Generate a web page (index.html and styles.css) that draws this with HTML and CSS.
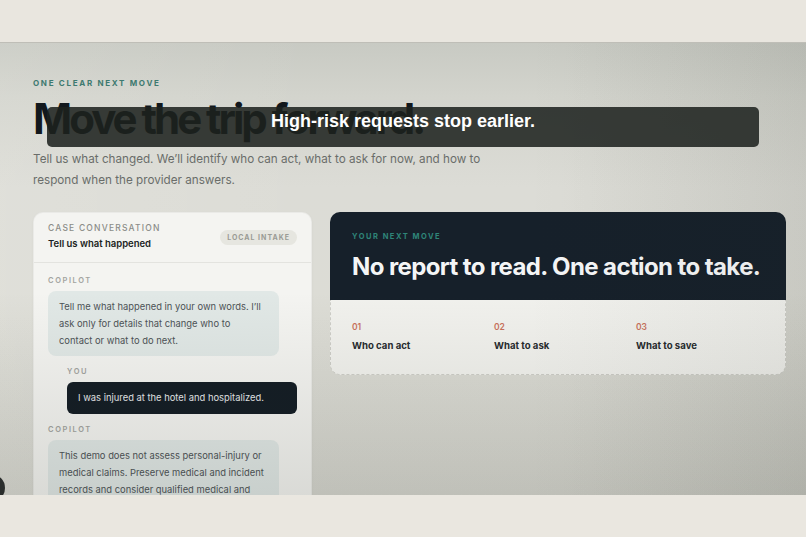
FILE: index.html
```html
<!DOCTYPE html>
<html lang="en">
<head>
<meta charset="utf-8">
<title>Move the trip forward</title>
<link rel="stylesheet" href="styles.css">
</head>
<body>
<div class="band-top"></div>
<main class="stage">
  <header class="hero">
    <p class="eyebrow">ONE CLEAR NEXT MOVE</p>
    <h1 class="title">Move the trip forward.</h1>
    <p class="lede">Tell us what changed. We’ll identify who can act, what to ask for now, and how to respond when the provider answers.</p>
  </header>
  <div class="cols">
    <section class="chat">
      <div class="chat-head">
        <div>
          <p class="chat-kicker">CASE CONVERSATION</p>
          <p class="chat-title">Tell us what happened</p>
        </div>
        <span class="badge">LOCAL INTAKE</span>
      </div>
      <div class="chat-body">
        <div class="msg bot">
          <p class="who">COPILOT</p>
          <p class="bubble">Tell me what happened in your own words. I’ll ask only for details that change who to contact or what to do next.</p>
        </div>
        <div class="msg me">
          <p class="who">YOU</p>
          <p class="bubble">I was injured at the hotel and hospitalized.</p>
        </div>
        <div class="msg bot">
          <p class="who">COPILOT</p>
          <p class="bubble">This demo does not assess personal-injury or medical claims. Preserve medical and incident records and consider qualified medical and legal help.</p>
        </div>
      </div>
    </section>
    <section class="move">
      <div class="move-top">
        <p class="move-kicker">YOUR NEXT MOVE</p>
        <h2 class="move-title">No report to read. One action to take.</h2>
      </div>
      <ol class="steps">
        <li class="step"><span class="step-num">01</span><span class="step-label">Who can act</span></li>
        <li class="step"><span class="step-num">02</span><span class="step-label">What to ask</span></li>
        <li class="step"><span class="step-num">03</span><span class="step-label">What to save</span></li>
      </ol>
    </section>
  </div>
  <div class="shade"></div>
  <div class="caption">High-risk requests stop earlier.</div>
  <span class="fab"></span>
</main>
<div class="band-bottom"></div>
</body>
</html>
```

FILE: styles.css
```css
* { box-sizing: border-box; margin: 0; padding: 0; }
html, body { width: 806px; height: 537px; overflow: hidden; }
body {
  background: #e9e6df;
  font-family: Inter, "Noto Sans", sans-serif;
  color: #13191e;
}

.band-top {
  height: 43px;
  background: #e9e6df;
  border-bottom: 1px solid #bfbeb7;
}
.band-bottom {
  height: 42px;
  background: #eae7e0;
}

.stage {
  position: relative;
  height: 452px;
  overflow: hidden;
  padding: 34px 20px 0 33px;
  background:
    linear-gradient(90deg, rgba(255,255,250,0.10) 0%, rgba(255,255,250,0) 40%, rgba(0,0,0,0) 70%, rgba(40,45,35,0.06) 100%),
    linear-gradient(180deg, #c8cac3 0%, #d3d4cd 12%, #dcdcd6 32%, #dcdcd5 60%, #d6d6cf 100%);
}

/* hero */
.eyebrow {
  font-size: 8px;
  line-height: 12px;
  font-weight: 700;
  letter-spacing: 1.7px;
  color: #3e7a70;
}
.title {
  margin-top: 8px;
  font-size: 42px;
  line-height: 44px;
  font-weight: 700;
  letter-spacing: -3px;
  color: #12181d;
}
.lede {
  margin-top: 8px;
  max-width: 455px;
  font-size: 11.7px;
  line-height: 21px;
  color: #6a6d6a;
}

/* columns */
.cols {
  margin-top: 21px;
  display: flex;
  gap: 18px;
  align-items: flex-start;
}

/* chat card */
.chat {
  width: 279px;
  flex: none;
  height: 320px;
  background: #f4f4f1;
  border: 1px solid rgba(0,0,0,0.04);
  border-radius: 10px;
  box-shadow: 0 1px 3px rgba(0,0,0,0.04);
  overflow: hidden;
}
.chat-head {
  display: flex;
  align-items: center;
  justify-content: space-between;
  padding: 10px 14px 11px 14px;
  border-bottom: 1px solid #e3e3df;
}
.chat-kicker {
  font-size: 8.5px;
  line-height: 11px;
  font-weight: 500;
  letter-spacing: 1.2px;
  color: #8b8c88;
}
.chat-title {
  margin-top: 3px;
  font-size: 9.5px;
  line-height: 14px;
  font-weight: 600;
  color: #1b1f22;
}
.badge {
  display: inline-flex;
  align-items: center;
  height: 15px;
  padding: 0 7px;
  border-radius: 999px;
  background: #e6e6e0;
  font-size: 7px;
  font-weight: 700;
  letter-spacing: 1px;
  color: #9a9b95;
}
.chat-body {
  padding: 13px 14px 0 14px;
  display: flex;
  flex-direction: column;
  gap: 11px;
}
.msg { width: 231px; }
.msg.me { margin-left: auto; width: 230px; }
.who {
  font-size: 7.5px;
  line-height: 10px;
  font-weight: 600;
  letter-spacing: 1.6px;
  color: #a2a39f;
  margin-bottom: 5px;
}
.bubble {
  font-size: 9.4px;
  line-height: 17px;
  padding: 7px 11px;
  border-radius: 8px;
}
.msg.bot .bubble {
  background: #e1e8e6;
  color: #4d5356;
  padding-right: 13px;
}
.msg.me .bubble {
  background: #131c24;
  color: #e8eaec;
  line-height: 18px;
  border-radius: 6px;
}

/* next move card */
.move {
  flex: none;
  width: 456px;
  border-radius: 10px;
  overflow: hidden;
}
.move-top {
  background: #16202a;
  padding: 20px 22px 18px 22px;
}
.move-kicker {
  font-size: 7.5px;
  line-height: 10px;
  font-weight: 700;
  letter-spacing: 1.5px;
  color: #2f8579;
}
.move-title {
  margin-top: 10px;
  font-size: 24px;
  line-height: 30px;
  font-weight: 700;
  letter-spacing: -0.6px;
  color: #f4f5f6;
}
.steps {
  list-style: none;
  display: grid;
  grid-template-columns: repeat(3, 142px);
  padding: 22px 21px 21px 21px;
  background: #f1f1ed;
  border: 1px dashed #cdcdc7;
  border-top: none;
  border-radius: 0 0 10px 10px;
}
.step { display: flex; flex-direction: column; }
.step-num {
  font-size: 8.5px;
  line-height: 11px;
  font-weight: 600;
  color: #c9725b;
}
.step-label {
  margin-top: 6px;
  font-size: 9.6px;
  line-height: 14px;
  font-weight: 700;
  color: #272b2e;
}

/* video overlays */
.shade {
  position: absolute;
  inset: 0;
  pointer-events: none;
  background:
    linear-gradient(180deg, rgba(40,45,35,0) 55%, rgba(40,45,35,0.13) 100%),
    linear-gradient(90deg, rgba(40,45,35,0) 65%, rgba(40,45,35,0.05) 100%);
}
.caption {
  position: absolute;
  left: 47px;
  top: 64px;
  width: 712px;
  height: 40px;
  padding-top: 3px;
  border-radius: 5px;
  background: rgba(29,33,30,0.865);
  font-family: "Liberation Sans", Arial, sans-serif;
  font-size: 18px;
  line-height: 22px;
  font-weight: 700;
  color: #ffffff;
  text-align: center;
}
.fab {
  position: absolute;
  left: -23px;
  top: 431px;
  width: 28px;
  height: 28px;
  border-radius: 50%;
  background: #2b2e2d;
}
```
